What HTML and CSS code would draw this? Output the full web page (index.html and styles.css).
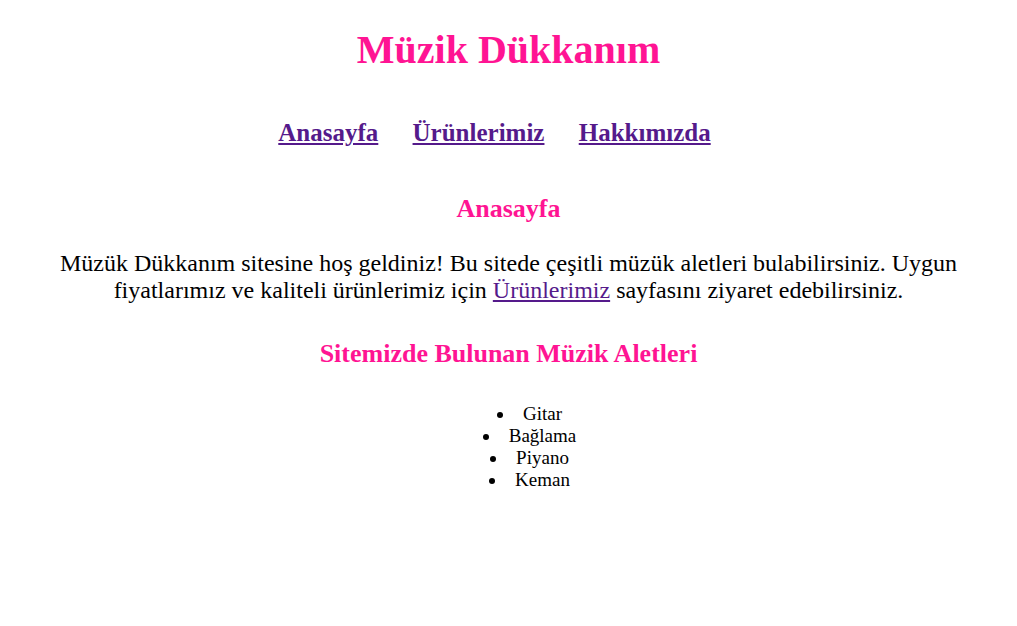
FILE: index.html
```html
<!DOCTYPE html>
<html lang="tr">
<head>
<meta charset="utf-8">
<title>Müzik Dükkanım</title>
<link rel="stylesheet" href="styles.css">
</head>
<body>
<h1 class="title">Müzik Dükkanım</h1>
<nav class="nav">
<a href="#">Anasayfa</a>
<a href="#">Ürünlerimiz</a>
<a href="#">Hakkımızda</a>
</nav>
<h2 class="heading first">Anasayfa</h2>
<p class="intro">Müzük Dükkanım sitesine hoş geldiniz! Bu sitede çeşitli müzük aletleri bulabilirsiniz. Uygun fiyatlarımız ve kaliteli ürünlerimiz için <a href="#">Ürünlerimiz</a> sayfasını ziyaret edebilirsiniz.</p>
<h2 class="heading second">Sitemizde Bulunan Müzik Aletleri</h2>
<ul class="list">
<li>Gitar</li>
<li>Bağlama</li>
<li>Piyano</li>
<li>Keman</li>
</ul>
</body>
</html>
```
FILE: styles.css
```css
body {
  margin: 8px;
  font-family: "Liberation Serif", "Times New Roman", serif;
  text-align: center;
  color: #000;
  background: #fff;
}
a {
  color: #551a8b;
}
.title {
  font-size: 40px;
  color: #ff1493;
  margin: 19px 0 26.8px;
  line-height: 46px;
}
.nav {
  font-size: 25px;
  font-weight: bold;
  margin: 46.4px 0 0;
  line-height: 27.6px;
}
.nav a {
  margin-right: 28px;
}
.heading {
  font-size: 26px;
  color: #ff1493;
  line-height: 27.6px;
  margin: 0;
}
.heading.first {
  margin-top: 48.4px;
}
.intro {
  font-size: 24px;
  line-height: 27px;
  margin: 27.4px 0 0;
}
.heading.second {
  margin-top: 36px;
}
.list {
  font-size: 19px;
  line-height: 22px;
  list-style-position: inside;
  margin: 35px 0 0;
  padding-left: 42px;
}
```
